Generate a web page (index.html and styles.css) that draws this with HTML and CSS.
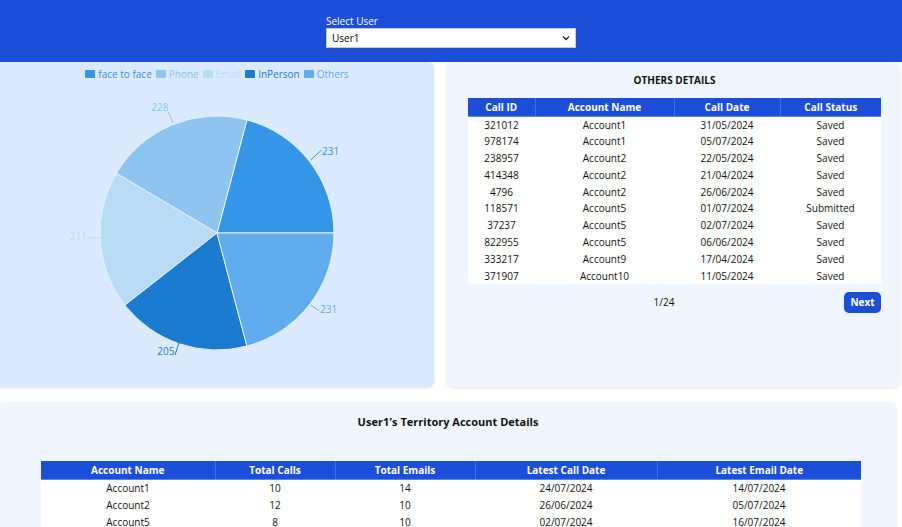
FILE: index.html
```html
<!DOCTYPE html>
<html>
<head>
<meta charset="utf-8">
<link rel="stylesheet" href="styles.css">
</head>
<body>
<header class="topbar">
  <div class="user-picker">
    <label class="picker-label">Select User</label>
    <div class="picker">
      <span>User1</span>
      <svg class="chev" width="8" height="6" viewBox="0 0 8 6"><path d="M1 1.5 L4 4.5 L7 1.5" fill="none" stroke="#222" stroke-width="1.3"/></svg>
    </div>
  </div>
</header>

<div class="row">
  <section class="card chart-card">
    <div class="legend">
      <span class="lg"><i class="sw c1"></i><span class="t1">face to face</span></span>
      <span class="lg"><i class="sw c2"></i><span class="t2">Phone</span></span>
      <span class="lg"><i class="sw c3"></i><span class="t3">Email</span></span>
      <span class="lg"><i class="sw c4"></i><span class="t4">InPerson</span></span>
      <span class="lg"><i class="sw c5"></i><span class="t5">Others</span></span>
    </div>
    <svg class="pie" width="434" height="301" viewBox="0 0 434 301">
      <g stroke="#e8f2fd" stroke-width="1">
        <path d="M217 147 L334 147 A117 117 0 0 0 246.9 33.9 Z" fill="#3595e6"/>
        <path d="M217 147 L246.9 33.9 A117 117 0 0 0 116.3 87.4 Z" fill="#8dc4f0"/>
        <path d="M217 147 L116.3 87.4 A117 117 0 0 0 124.9 219.2 Z" fill="#b9dcf6"/>
        <path d="M217 147 L124.9 219.2 A117 117 0 0 0 246.9 260.1 Z" fill="#1a7bd0"/>
        <path d="M217 147 L246.9 260.1 A117 117 0 0 0 334 147 Z" fill="#60acec"/>
      </g>
      <g fill="none" stroke-width="1">
        <path d="M310.7 74 L321.5 64" stroke="#3595e6"/>
        <path d="M173 37 L168.5 26" stroke="#8dc4f0"/>
        <path d="M100 152 L87 151.5" stroke="#b9dcf6"/>
        <path d="M310.7 219 L319.3 225" stroke="#60acec"/>
        <path d="M179 256.7 L175 269" stroke="#1a7bd0"/>
      </g>
      <g class="lbl">
        <text x="322" y="68.5" fill="#3a8fdc">231</text>
        <text x="168.5" y="25" fill="#8dc4f0" text-anchor="end">228</text>
        <text x="87" y="153.5" fill="#b9dcf6" text-anchor="end">211</text>
        <text x="320" y="226.5" fill="#60acec">231</text>
        <text x="174.5" y="268.5" fill="#1a7bd0" text-anchor="end">205</text>
      </g>
    </svg>
  </section>

  <section class="card details-card">
    <h2 class="card-title">OTHERS DETAILS</h2>
    <table class="tbl small">
      <colgroup><col style="width:67px"><col style="width:139px"><col style="width:106px"><col style="width:101px"></colgroup>
      <thead><tr><th>Call ID</th><th>Account Name</th><th>Call Date</th><th>Call Status</th></tr></thead>
      <tbody>
        <tr><td>321012</td><td>Account1</td><td>31/05/2024</td><td>Saved</td></tr>
        <tr><td>978174</td><td>Account1</td><td>05/07/2024</td><td>Saved</td></tr>
        <tr><td>238957</td><td>Account2</td><td>22/05/2024</td><td>Saved</td></tr>
        <tr><td>414348</td><td>Account2</td><td>21/04/2024</td><td>Saved</td></tr>
        <tr><td>4796</td><td>Account2</td><td>26/06/2024</td><td>Saved</td></tr>
        <tr><td>118571</td><td>Account5</td><td>01/07/2024</td><td>Submitted</td></tr>
        <tr><td>37237</td><td>Account5</td><td>02/07/2024</td><td>Saved</td></tr>
        <tr><td>822955</td><td>Account5</td><td>06/06/2024</td><td>Saved</td></tr>
        <tr><td>333217</td><td>Account9</td><td>17/04/2024</td><td>Saved</td></tr>
        <tr><td>371907</td><td>Account10</td><td>11/05/2024</td><td>Saved</td></tr>
      </tbody>
    </table>
    <div class="pager">
      <span class="page-num">1/24</span>
      <button class="next-btn">Next</button>
    </div>
  </section>
</div>

<section class="card territory-card">
  <h2 class="territory-title">User1's Territory Account Details</h2>
  <table class="tbl wide">
    <colgroup><col style="width:174px"><col style="width:120px"><col style="width:140px"><col style="width:182px"><col style="width:204px"></colgroup>
    <thead><tr><th>Account Name</th><th>Total Calls</th><th>Total Emails</th><th>Latest Call Date</th><th>Latest Email Date</th></tr></thead>
    <tbody>
      <tr><td>Account1</td><td>10</td><td>14</td><td>24/07/2024</td><td>14/07/2024</td></tr>
      <tr><td>Account2</td><td>12</td><td>10</td><td>26/06/2024</td><td>05/07/2024</td></tr>
      <tr><td>Account5</td><td>8</td><td>10</td><td>02/07/2024</td><td>16/07/2024</td></tr>
    </tbody>
  </table>
</section>
</body>
</html>
```

FILE: styles.css
```css
* { box-sizing: border-box; }
html, body { margin: 0; padding: 0; }
body {
  font-family: "Open Sans", "Noto Sans", sans-serif;
  font-size: 10px;
  color: #111;
  background: #fff;
  width: 902px;
  height: 527px;
  overflow: hidden;
}
.topbar {
  height: 62px;
  background: #1d4ed8;
  display: flex;
  justify-content: center;
  padding-top: 14px;
}
.user-picker { width: 250px; display: flex; flex-direction: column; }
.picker-label { color: #fff; font-size: 10px; line-height: 14px; }
.picker {
  height: 20px;
  background: #fff;
  border: 1px solid #c9c9c9;
  display: flex;
  align-items: center;
  justify-content: space-between;
  padding: 0 4px 0 5px;
  font-size: 10px;
  color: #000;
}
.chev { margin-right: 1px; }

.row {
  display: flex;
  gap: 13px;
  height: 325px;
  width: 900px;
}
.card {
  border-radius: 6px;
  box-shadow: 0 1px 3px rgba(0,0,0,0.12);
}
.chart-card {
  width: 434px;
  background: #dbeafe;
  border-radius: 0 6px 6px 0;
}
.legend {
  height: 23px;
  display: flex;
  justify-content: center;
  align-items: center;
  gap: 4px;
  font-size: 10px;
  line-height: 12px;
  padding-left: 0;
}
.lg { display: flex; align-items: center; gap: 3px; }
.sw { display: inline-block; width: 10px; height: 8px; border-radius: 1px; }
.c1 { background: #3595e6; } .t1 { color: #3a8fdc; }
.c2 { background: #8dc4f0; } .t2 { color: #8dc4f0; }
.c3 { background: #b9dcf6; } .t3 { color: #b9dcf6; }
.c4 { background: #1a7bd0; } .t4 { color: #1a7bd0; }
.c5 { background: #60acec; } .t5 { color: #60acec; }
.pie { display: block; margin-top: 1px; }
.lbl text { font-size: 10px; font-family: "Open Sans", "Noto Sans", sans-serif; }

.details-card {
  flex: 1;
  background: #eff6ff;
  padding: 10px 19px 0 21px;
}
.card-title {
  margin: 0;
  text-align: center;
  font-size: 10px;
  font-weight: 700;
  line-height: 16px;
  height: 26px;
}
.tbl {
  border-collapse: collapse;
  table-layout: fixed;
  background: #fff;
  font-size: 10px;
}
.tbl th {
  background: #1d4ed8;
  color: #fff;
  font-weight: 700;
  height: 18px;
  padding: 0;
  border-left: 1px solid #3f6fe3;
  border-bottom: 1px solid #5b86ea;
}
.tbl th:first-child { border-left: none; }
.tbl td {
  text-align: center;
  padding: 0;
  height: 16.8px;
  line-height: 14px;
}
.small { width: 413px; }
.pager {
  display: flex;
  align-items: center;
  margin-top: 8px;
}
.page-num { flex: 1; text-align: center; padding-left: 16px; font-size: 10px; }
.next-btn {
  width: 37px;
  height: 21px;
  background: #1d4ed8;
  color: #fff;
  border: none;
  border-radius: 5px;
  font-family: inherit;
  font-size: 10px;
  font-weight: 700;
  padding: 0;
}

.territory-card {
  margin-top: 15px;
  width: 896px;
  height: 200px;
  background: #eff6ff;
  border-radius: 0 6px 6px 0;
  padding-top: 12px;
}
.territory-title {
  margin: 0;
  text-align: center;
  font-size: 11px;
  font-weight: 700;
  line-height: 16px;
  height: 47px;
}
.wide { width: 820px; margin-left: 41px; }
.wide td { height: 17px; }
```
